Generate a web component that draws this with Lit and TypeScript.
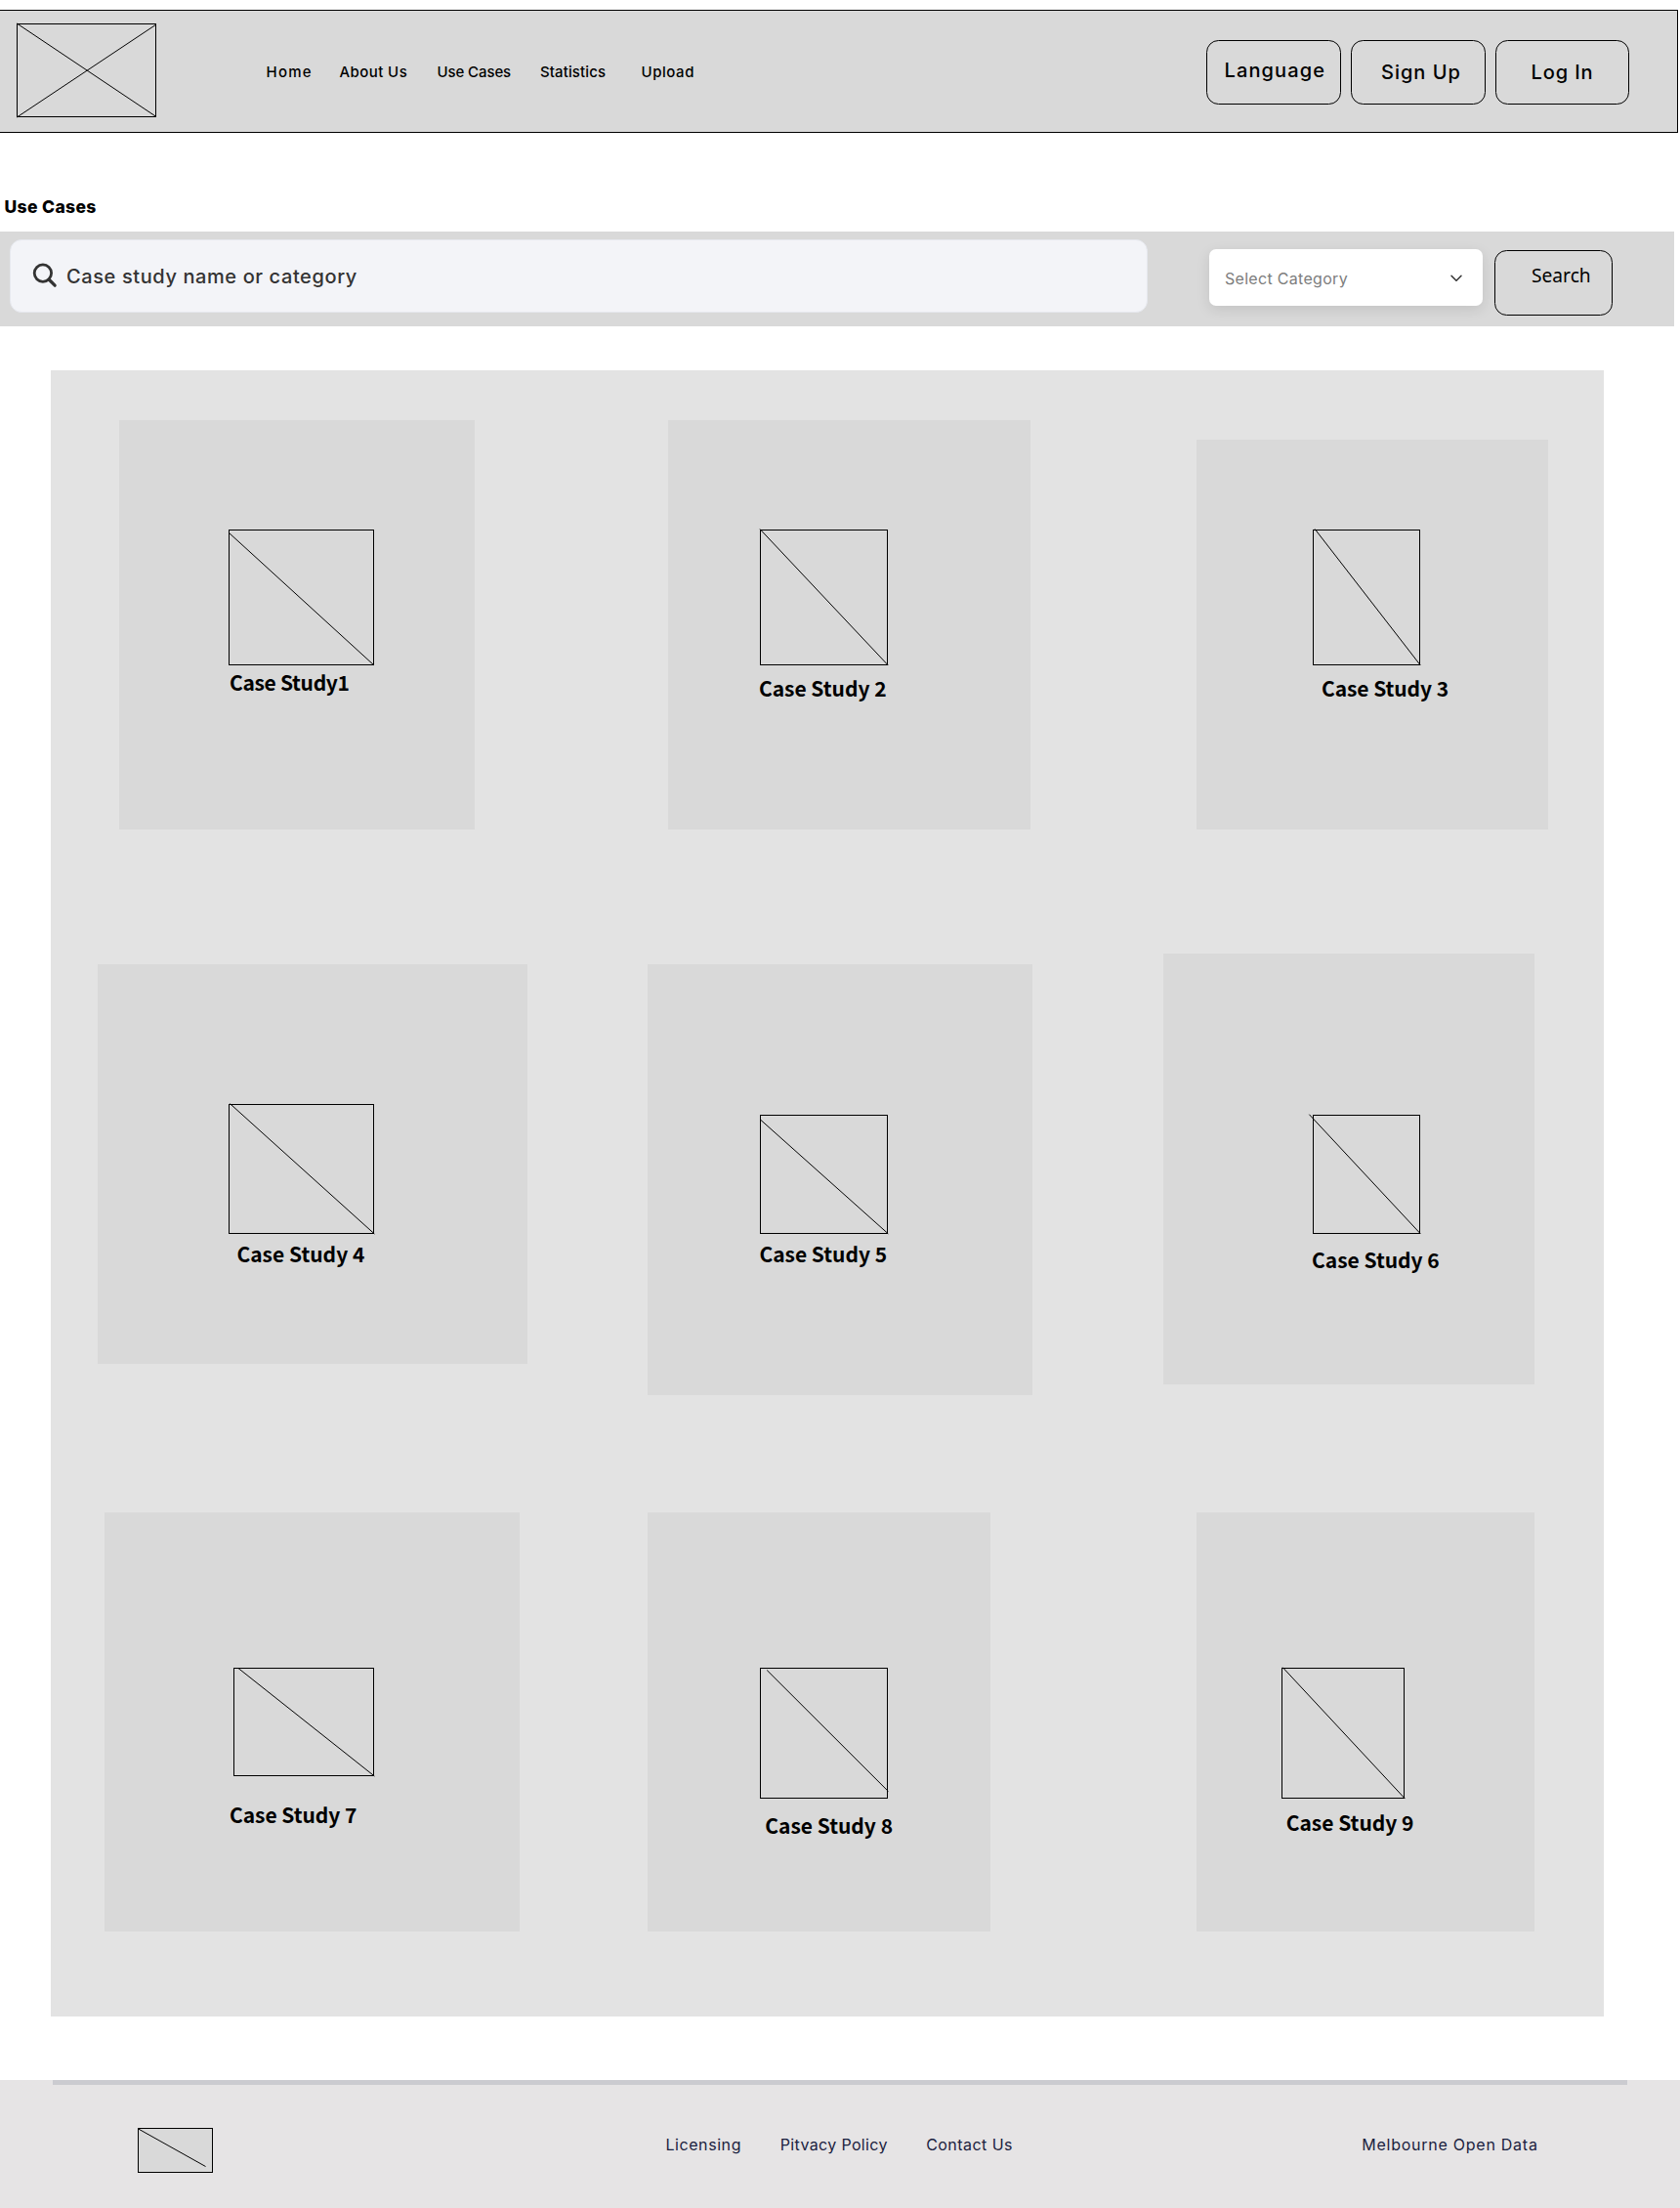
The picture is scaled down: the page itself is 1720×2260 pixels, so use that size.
import { LitElement, html, css, svg } from "lit";
import { customElement, property } from "lit/decorators.js";
import { styleMap } from "lit/directives/style-map.js";

type Line = [number, number, number, number];

interface Study {
  title: string;
  track: number;
  /** Card box: left gap to the previous card, offset from the row top, width, height. */
  card: [number, number, number, number];
  /** Picture frame inside the card: left, top, width, height. */
  frame: [number, number, number, number];
  line: Line;
  /** Title offset from the frame's bottom left corner. */
  label: [number, number];
}

const ROWS: Study[][] = [
  [
    { title: "Case Study1", track: -0.32, card: [70, 0, 364, 419], frame: [112, 112, 149, 139], line: [0, 3, 149, 139], label: [1, 3] },
    { title: "Case Study 2", track: -0.04, card: [198, 0, 371, 419], frame: [94, 112, 131, 139], line: [0, -0.5, 131.3, 139], label: [-1, 9] },
    { title: "Case Study 3", track: -0.08, card: [170, 20, 360, 399], frame: [119, 92, 110, 139], line: [2.2, -0.5, 110.3, 139], label: [9, 9] },
  ],
  [
    { title: "Case Study 4", track: 0, card: [48, 11, 440, 409], frame: [134, 143, 149, 133], line: [1.5, -0.3, 149.4, 133], label: [8.4, 6] },
    { title: "Case Study 5", track: -0.04, card: [123, 11, 394, 441], frame: [115, 154, 131, 122], line: [0.5, 5, 131.3, 121.8], label: [-0.5, 6] },
    { title: "Case Study 6", track: -0.02, card: [134, 0, 380, 441], frame: [153, 165, 110, 122], line: [-3.6, -0.3, 110.3, 121.8], label: [-1, 12] },
  ],
  [
    { title: "Case Study 7", track: -0.06, card: [55, 0, 425, 429], frame: [132, 159, 144, 111], line: [5, 0.5, 144.4, 111], label: [-4, 25] },
    { title: "Case Study 8", track: -0.02, card: [131, 0, 351, 429], frame: [115, 159, 131, 134], line: [7.2, 2.5, 131.4, 126.5], label: [5.3, 13] },
    { title: "Case Study 9", track: -0.02, card: [211, 0, 346, 429], frame: [87, 159, 126, 134], line: [1.3, -0.3, 126.4, 134], label: [4.7, 10] },
  ],
];

const px = (n: number) => `${n}px`;

/** A thin-outlined placeholder picture crossed by one or more lines. */
@customElement("wire-frame")
class WireFrame extends LitElement {
  @property({ type: Number }) w = 0;
  @property({ type: Number }) h = 0;
  @property({ attribute: false }) lines: Line[] = [];

  static styles = css`
    :host { display: block; flex: none; }
    .art { display: block; overflow: visible; }
    .box { fill: #d9d9d9; stroke: #000; stroke-width: 1; }
    .line { stroke: #000; stroke-width: 1; }
  `;

  render() {
    return html`<svg class="art" width=${this.w} height=${this.h}>
      <rect class="box" x="0.5" y="0.5" width=${Math.max(this.w - 1, 0)} height=${Math.max(this.h - 1, 0)}></rect>
      ${this.lines.map(([a, b, c, d]) => svg`<line class="line" x1=${a} y1=${b} x2=${c} y2=${d}></line>`)}
    </svg>`;
  }
}

@customElement("study-card")
class StudyCard extends LitElement {
  @property({ attribute: false }) study!: Study;

  static styles = css`
    :host { display: block; flex: none; }
    .card { box-sizing: border-box; background: #d9d9d9; }
    .title {
      margin: 0;
      font: 700 21px/28px "Noto Sans CJK SC", "Noto Sans", sans-serif;
      color: #000;
      white-space: nowrap;
    }
  `;

  render() {
    const { title, track, card, frame, line, label } = this.study;
    return html`<article class="card" style=${styleMap({
      width: px(card[2]),
      height: px(card[3]),
      marginLeft: px(card[0]),
      marginTop: px(card[1]),
      paddingLeft: px(frame[0]),
      paddingTop: px(frame[1]),
    })}>
      <wire-frame .w=${frame[2]} .h=${frame[3]} .lines=${[line]}></wire-frame>
      <h2 class="title" style=${styleMap({
        marginLeft: px(label[0]),
        marginTop: px(label[1]),
        letterSpacing: px(track),
      })}>${title}</h2>
    </article>`;
  }
}

@customElement("app-root")
class AppRoot extends LitElement {
  static styles = css`
    :host {
      display: block;
      width: 1720px;
      height: 2260px;
      overflow: hidden;
      background: #fff;
      color: #000;
      font-family: Inter, "Open Sans", sans-serif;
    }
    * { box-sizing: border-box; }
    .page { display: flex; flex-direction: column; height: 2260px; padding-top: 10px; }

    .header {
      display: flex;
      align-items: flex-start;
      width: 1718px;
      height: 126px;
      flex: none;
      border: 1px solid #000;
      border-left: 0;
      background: #d9d9d9;
      padding: 13px 49px 0 17px;
    }
    .nav {
      display: grid;
      grid-template-columns: 75px 100px 105.5px 103.5px 70px;
      margin: 40px 0 0 112.5px;
      font-weight: 450;
      font-size: 15px;
      line-height: 19px;
      white-space: nowrap;
    }
    .home { letter-spacing: 1.25px; }
    .about { letter-spacing: 0.42px; }
    .cases { letter-spacing: -0.1px; }
    .stats { letter-spacing: 0.12px; }
    .upload { letter-spacing: 0.55px; }
    .actions { display: flex; gap: 10px; margin: 17px 0 0 auto; }
    .btn {
      border: 1px solid #000;
      border-radius: 12.5px;
      width: 138px;
      height: 66px;
      background: none;
      font-weight: 450;
      font-size: 20px;
      line-height: 24px;
      white-space: nowrap;
    }
    .language { padding: 18px 0 0 17.5px; letter-spacing: 1.12px; }
    .signup { padding: 20px 0 0 30px; letter-spacing: 1px; }
    .login { padding: 20px 0 0 35.5px; letter-spacing: 0.88px; width: 137px; }

    .heading {
      margin: 65px 0 0 4.5px;
      font-size: 17.5px;
      font-weight: 800;
      line-height: 21px;
      letter-spacing: 0.36px;
    }

    .filters {
      display: flex;
      align-items: flex-start;
      width: 1714px;
      height: 97px;
      flex: none;
      margin-top: 15px;
      padding: 8px 0 0 10px;
      background: #d9d9d9;
    }
    .query {
      display: flex;
      width: 1165px;
      height: 75px;
      border: 1px solid #e6e8ee;
      border-radius: 12px;
      background: #f3f4f8;
      padding: 23px 0 0 22px;
    }
    .glass { display: block; flex: none; width: 26px; height: 26px; }
    .hint {
      margin: 2px 0 0 9px;
      font-size: 20px;
      font-weight: 450;
      line-height: 24px;
      letter-spacing: 0.6px;
      color: #333;
    }
    .select {
      display: flex;
      justify-content: space-between;
      width: 280px;
      height: 58px;
      margin: 10px 0 0 63px;
      padding: 20px 20px 0 16px;
      border-radius: 7px;
      background: #fff;
      box-shadow: 0 4px 14px rgba(0, 0, 0, 0.1);
      font-size: 16px;
      line-height: 20px;
      letter-spacing: 0.3px;
      color: #7d7d7d;
    }
    .chevron { display: block; width: 14px; height: 10px; margin-top: 5px; }
    .search {
      width: 121px;
      height: 67px;
      margin: 10.5px 0 0 12px;
      border: 1px solid #000;
      border-radius: 12.5px;
      padding: 11px 0 0 37px;
      font: 400 19.2px/27px "Noto Sans", "Open Sans", sans-serif;
    }

    .gallery {
      width: 1590px;
      height: 1685px;
      flex: none;
      margin: 45px 0 0 52px;
      padding-top: 51px;
      background: #e3e3e3;
    }
    .row { display: flex; align-items: flex-start; }
    .row + .row { margin-top: 127px; }
    .row + .row + .row { margin-top: 120px; }

    .footer { height: 131px; flex: none; margin-top: 65px; background: #e6e4e5; }
    .rule { height: 5px; margin: 0 54px; background: #cbcbd0; }
    .foot { display: flex; align-items: flex-start; padding: 44px 0 0 141px; }
    .links {
      display: grid;
      grid-template-columns: 117.4px 149.4px 446.2px auto;
      margin: 7px 0 0 463.4px;
      font-size: 16px;
      line-height: 20px;
      color: #1b2240;
      white-space: nowrap;
    }
    .licensing { letter-spacing: 0.58px; }
    .privacy { letter-spacing: 0.35px; }
    .contact { letter-spacing: 0.45px; }
    .melbourne { letter-spacing: 0.74px; }
  `;

  render() {
    return html`<div class="page">
      <header class="header">
        <wire-frame .w=${143} .h=${96} .lines=${[[0.3, 0, 143, 95.5], [0.3, 96, 143, 1]]}></wire-frame>
        <nav class="nav">
          <span class="home">Home</span>
          <span class="about">About Us</span>
          <span class="cases">Use Cases</span>
          <span class="stats">Statistics</span>
          <span class="upload">Upload</span>
        </nav>
        <div class="actions">
          <div class="btn language">Language</div>
          <div class="btn signup">Sign Up</div>
          <div class="btn login">Log In</div>
        </div>
      </header>
      <h1 class="heading">Use Cases</h1>
      <section class="filters">
        <div class="query">
          <svg class="glass" viewBox="0 0 26 26" fill="none" stroke="#333" stroke-width="2.8">
            <circle cx="10.9" cy="10.6" r="8.7"></circle>
            <path d="M17 17 L23.2 23.2" stroke-width="3.2" stroke-linecap="round"></path>
          </svg>
          <span class="hint">Case study name or category</span>
        </div>
        <div class="select">
          <span>Select Category</span>
          <svg class="chevron" viewBox="0 0 14 10" fill="none" stroke="#333" stroke-width="1.5" stroke-linecap="round" stroke-linejoin="round">
            <path d="M2 2.2 L7 7.2 L12 2.2"></path>
          </svg>
        </div>
        <div class="search">Search</div>
      </section>
      <main class="gallery">
        ${ROWS.map((row) => html`<div class="row">${row.map((s) => html`<study-card .study=${s}></study-card>`)}</div>`)}
      </main>
      <footer class="footer">
        <div class="rule"></div>
        <div class="foot">
          <wire-frame .w=${77} .h=${46} .lines=${[[0.3, 0.8, 69.5, 39.5]]}></wire-frame>
          <div class="links">
            <span class="licensing">Licensing</span>
            <span class="privacy">Pitvacy Policy</span>
            <span class="contact">Contact Us</span>
            <span class="melbourne">Melbourne Open Data</span>
          </div>
        </div>
      </footer>
    </div>`;
  }
}
